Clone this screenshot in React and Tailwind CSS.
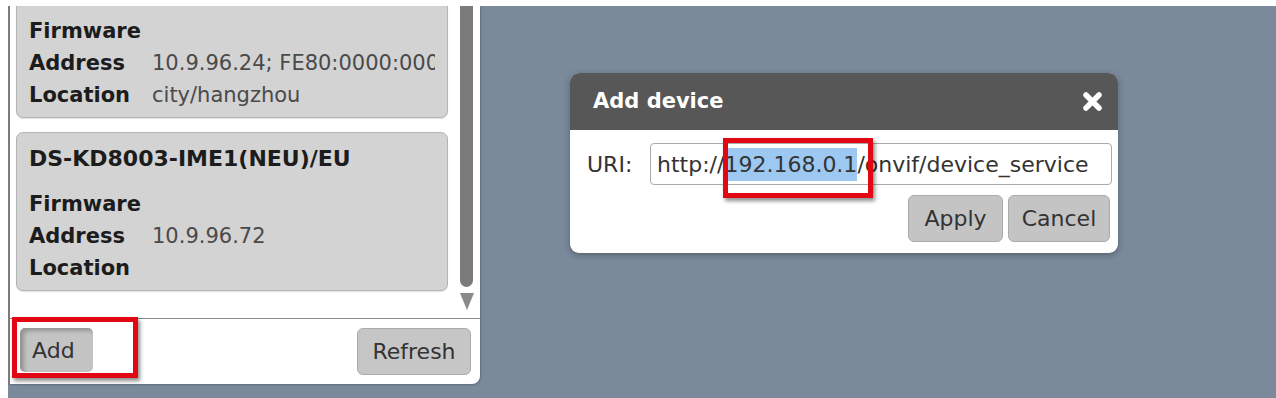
import React from 'react'

const FONT = { fontFamily: '"DejaVu Sans", "Open Sans", sans-serif' }

function Row({label, value}){
  return (
    <div className="flex leading-[32px] whitespace-nowrap">
      <div className="w-[123px] shrink-0 font-bold text-[#1c1c1c]">{label}</div>
      <div className="overflow-hidden text-[#4a4a4a]">{value}</div>
    </div>
  )
}

function DeviceCard({title, address, location, className=''}){
  return (
    <div className={`bg-[#d3d3d3] border border-[#b4b4b4] rounded-[7px] px-[12px] pb-[6px] shadow-[0_1px_1px_rgba(0,0,0,0.12)] ${className}`}>
      {title && <div className="font-bold text-[22px] leading-[30px] text-[#1c1c1c] whitespace-nowrap mb-[14px]">{title}</div>}
      <Row label="Firmware" value="" />
      <Row label="Address" value={address} />
      <Row label="Location" value={location} />
    </div>
  )
}

function CloseIcon(){
  return (
    <svg width="21" height="21" viewBox="0 0 21 21">
      <path d="M4 4 L17 17 M17 4 L4 17" stroke="#fff" strokeWidth="5.5" strokeLinecap="round" />
    </svg>
  )
}

export default function App(){
  return (
    <div className="w-[1276px] h-[398px] bg-white overflow-hidden flex flex-col text-[21px]" style={FONT}>
      <div className="h-[6px] shrink-0" />
      <div className="ml-[8px] flex-1 bg-[#7a8a9b] flex items-start">
        {/* Device list panel */}
        <div className="w-[472px] h-[378px] bg-white border-l-2 border-[#7c7c7c] rounded-br-[8px] flex flex-col shadow-[1px_1px_2px_rgba(0,0,0,0.2)]">
          <div className="h-[312px] flex overflow-hidden">
            <div className="ml-[6px] w-[432px] flex flex-col gap-[14px]">
              {/* first card is scrolled, its heading is out of view */}
              <DeviceCard className="-mt-[8px] pt-[16px]" address="10.9.96.24; FE80:0000:0000:0000:0000" location="city/hangzhou" />
              <DeviceCard className="pt-[11px]" title="DS-KD8003-IME1(NEU)/EU" address="10.9.96.72" location="" />
            </div>
            <div className="ml-[12px] w-[13px] flex flex-col items-center">
              <div className="w-[13px] h-[281px] bg-[#7b7b7b] rounded-b-full" />
              <svg className="mt-[6px]" width="14" height="17" viewBox="0 0 14 17">
                <path d="M0 0 H14 L7 17 Z" fill="#8a8a8a" />
              </svg>
            </div>
          </div>
          <div className="relative flex-1 border-t border-[#8a8a8a] flex items-start justify-between pt-[9px] pl-[10px] pr-[9px]">
            <button className="w-[73px] h-[44px] bg-[#c4c4c4] rounded-[5px] shadow-[inset_4px_3px_4px_rgba(0,0,0,0.25)] text-[#333] text-[22px] text-left pl-[12px]">Add</button>
            <button className="w-[114px] h-[47px] bg-[#c6c6c6] border border-[#ababab] rounded-[6px] text-[#333] text-[22px]">Refresh</button>
            <div className="absolute left-[2px] -top-[2px] w-[126px] h-[61px] border-[5px] border-[#e30613] shadow-[2px_3px_4px_rgba(0,0,0,0.45)]" />
          </div>
        </div>

        {/* Add device dialog */}
        <div className="ml-[90px] mt-[67px] w-[548px] rounded-[9px] bg-white shadow-[0_2px_6px_rgba(0,0,0,0.3)] text-[22px]">
          <div className="h-[57px] bg-[#575757] rounded-t-[9px] flex items-center justify-between pl-[23px] pr-[15px]">
            <span className="text-white font-bold text-[21px]">Add device</span>
            <CloseIcon />
          </div>
          <div className="pt-[13px] pb-[11px] pl-[17px] pr-[6px]">
            <div className="flex items-center">
              <span className="w-[63px] text-[#333]">URI:</span>
              <div className="relative w-[462px] h-[42px] border border-[#aaaaaa] rounded-[4px] flex items-center pl-[6px] text-[#333] whitespace-nowrap">
                <span>http://</span><span className="bg-[#9dc8f2]">192.168.0.1</span><span>/onvif/device_service</span>
                <div className="absolute left-[72px] -top-[6px] w-[150px] h-[60px] border-[5px] border-[#e30613] shadow-[2px_3px_4px_rgba(0,0,0,0.45)]" />
              </div>
            </div>
            <div className="mt-[10px] flex justify-end gap-[5px] pr-[2px]">
              <button className="w-[95px] h-[47px] bg-[#c4c4c4] border border-[#ababab] rounded-[6px] text-[#333]">Apply</button>
              <button className="w-[102px] h-[47px] bg-[#c4c4c4] border border-[#ababab] rounded-[6px] text-[#333]">Cancel</button>
            </div>
          </div>
        </div>
      </div>
    </div>
  )
}
